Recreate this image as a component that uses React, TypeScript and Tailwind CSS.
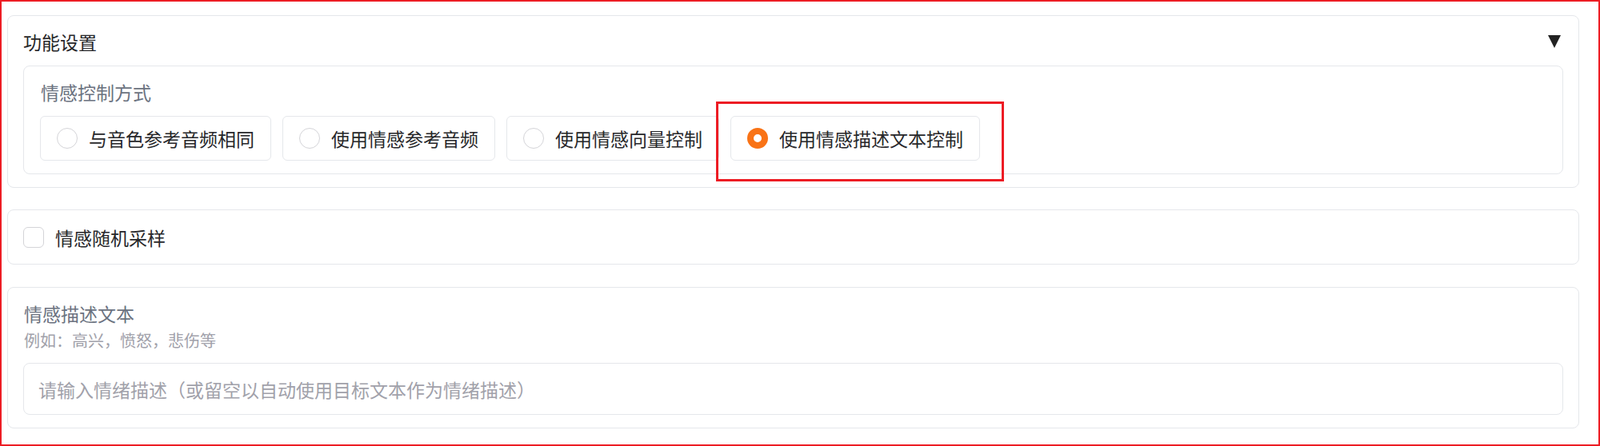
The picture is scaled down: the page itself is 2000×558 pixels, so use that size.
import React, { useState } from 'react';

type Mode = 'same' | 'audio' | 'vector' | 'text';

const modes: { id: Mode; label: string }[] = [
  { id: 'same', label: '与音色参考音频相同' },
  { id: 'audio', label: '使用情感参考音频' },
  { id: 'vector', label: '使用情感向量控制' },
  { id: 'text', label: '使用情感描述文本控制' },
];

function RadioOption({ label, checked, onSelect }: { label: string; checked: boolean; onSelect: () => void }) {
  return (
    <button
      type="button"
      onClick={onSelect}
      className="flex items-center gap-[14px] h-[56px] pl-5 pr-5 bg-white border border-[#e5e7eb] rounded-[6px]"
    >
      {checked ? (
        <span className="w-[26px] h-[26px] rounded-full border-[8px] border-[#f97316] bg-white shrink-0" />
      ) : (
        <span className="w-[26px] h-[26px] rounded-full border border-[#d4d4d8] bg-white shrink-0" />
      )}
      <span className="text-[23px] leading-[34px] text-[#27272a] whitespace-nowrap">{label}</span>
    </button>
  );
}

export default function App() {
  const [mode, setMode] = useState<Mode>('text');
  const [random, setRandom] = useState(false);
  const [desc, setDesc] = useState('');

  return (
    <div className="relative w-[2000px] h-[558px] bg-white border-2 border-[#ed1c24] pl-[7px] pr-[24px] pt-[17px] font-['Noto_Sans_CJK_SC','Noto_Sans',sans-serif]">
      {/* 功能设置 */}
      <div className="border border-[#e5e7eb] rounded-lg px-[19px] pt-[15px] pb-4">
        <div className="flex items-center justify-between">
          <span className="text-[23px] leading-[34px] text-[#27272a]">功能设置</span>
          <svg width="16" height="16" viewBox="0 0 16 16" className="mr-[3px]">
            <polygon points="0,0 16,0 8,16" fill="#222" />
          </svg>
        </div>
        <div className="mt-[13px] border border-[#e5e7eb] rounded-lg px-5 pt-[15px] pb-4">
          <div className="text-[23px] leading-[34px] text-[#6b7280] pl-px">情感控制方式</div>
          <div className="mt-[13px] flex gap-[14px]">
            {modes.map((m) => (
              <RadioOption key={m.id} label={m.label} checked={mode === m.id} onSelect={() => setMode(m.id)} />
            ))}
          </div>
        </div>
      </div>

      {/* 情感随机采样 */}
      <div className="mt-[27px] border border-[#e5e7eb] rounded-lg px-[19px] pt-[17px] pb-4">
        <label className="flex items-center gap-[14px] cursor-pointer">
          <span
            onClick={() => setRandom(!random)}
            className={`w-[26px] h-[26px] rounded-[6px] border ${random ? 'bg-[#f97316] border-[#f97316]' : 'bg-white border-[#d4d4d8]'}`}
          />
          <span className="text-[23px] leading-[34px] text-[#27272a]">情感随机采样</span>
        </label>
      </div>

      {/* 情感描述文本 */}
      <div className="mt-[28px] border border-[#e5e7eb] rounded-lg px-[19px] pt-[15px] pb-4">
        <div className="text-[23px] leading-[34px] text-[#6b7280] pl-px">情感描述文本</div>
        <div className="mt-[3px] text-[20px] leading-[28px] text-[#a1a1aa] pl-px">例如：高兴，愤怒，悲伤等</div>
        <input
          value={desc}
          onChange={(e) => setDesc(e.target.value)}
          placeholder="请输入情绪描述（或留空以自动使用目标文本作为情绪描述）"
          className="mt-[14px] block w-full h-[65px] border border-[#e5e7eb] rounded-lg pl-[18px] text-[23px] text-[#27272a] placeholder:text-[#a1a1aa] outline-none"
        />
      </div>

      {/* highlight */}
      <div className="absolute left-[893px] top-[125px] w-[360px] h-[100px] border-[3px] border-[#ed1c24] pointer-events-none" />
    </div>
  );
}
